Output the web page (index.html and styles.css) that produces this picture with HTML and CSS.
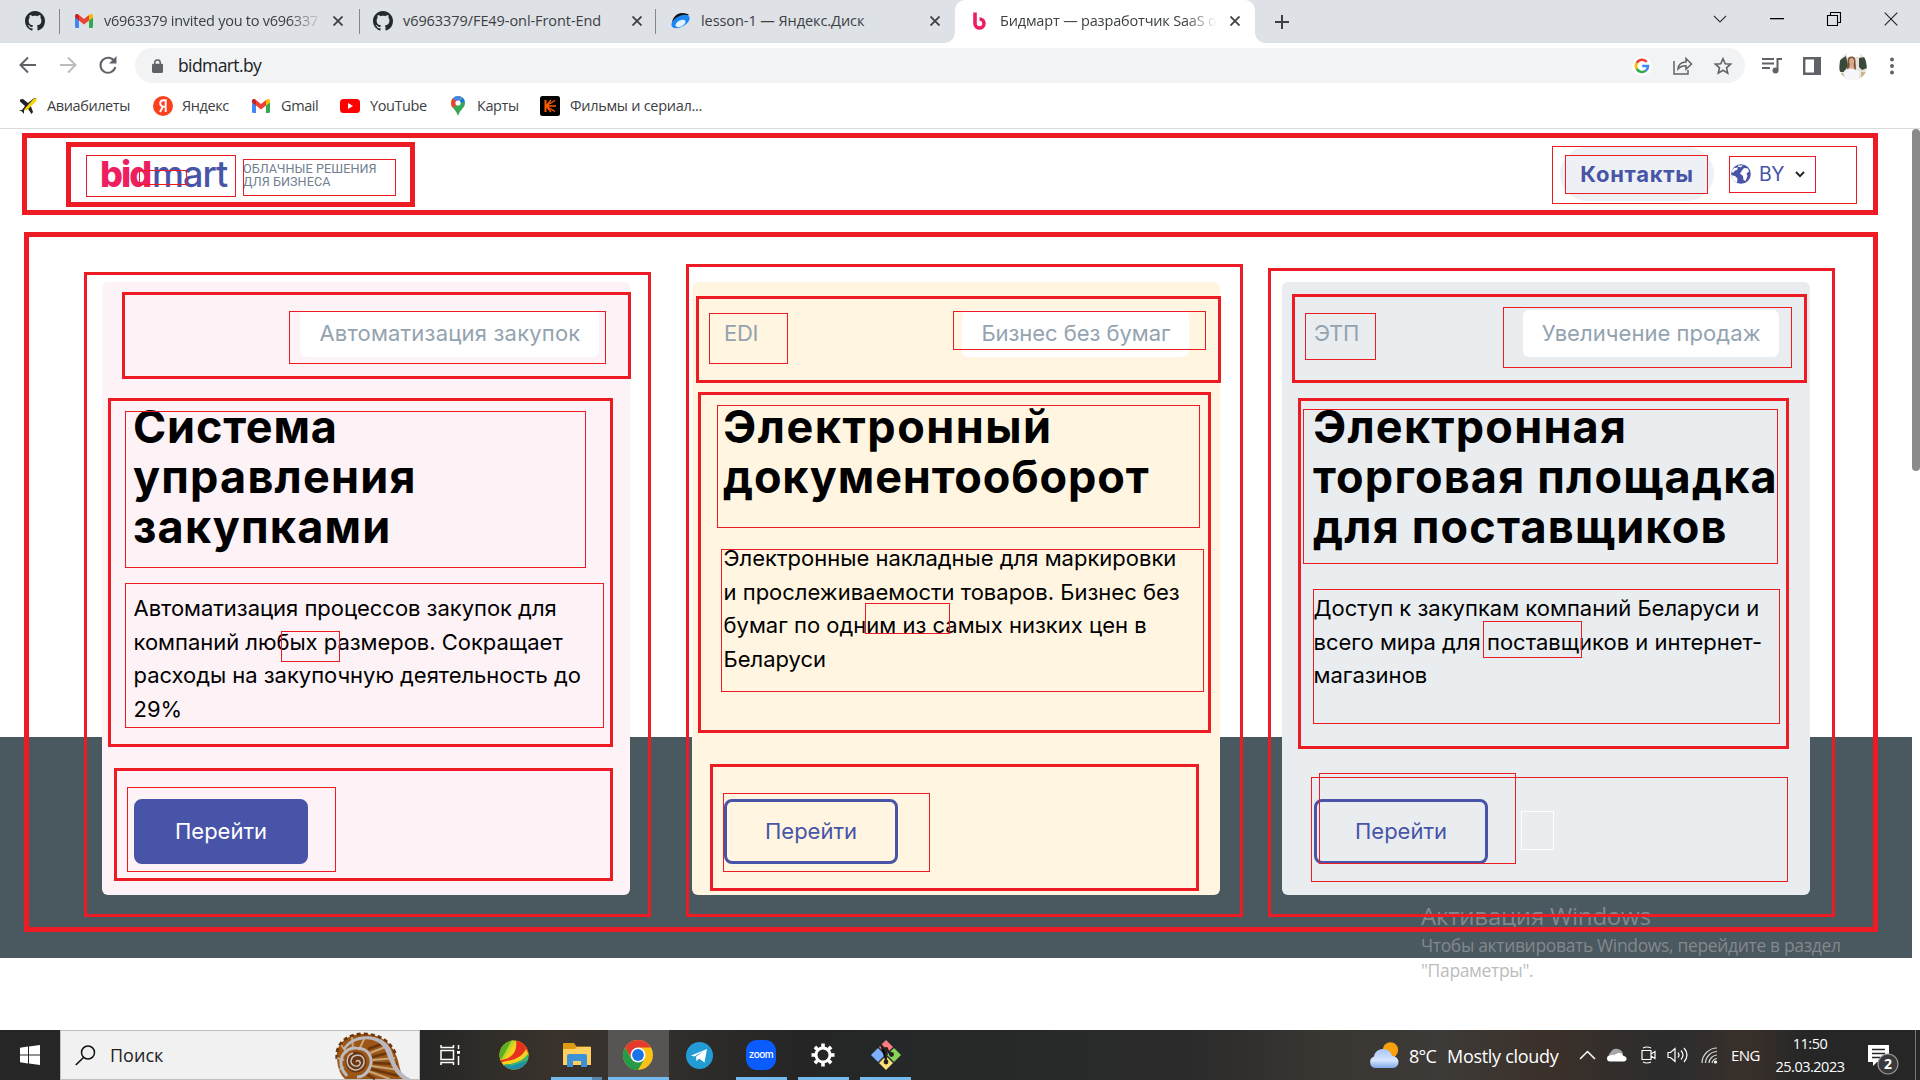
FILE: index.html
```html
<!DOCTYPE html>
<html lang="ru">
<head>
<meta charset="utf-8">
<title>Бидмарт — разработчик SaaS</title>
<link rel="stylesheet" href="styles.css">
</head>
<body>
<svg class="defs" width="0" height="0">
  <symbol id="github" viewBox="0 0 16 16"><path fill="#24292f" d="M8 0C3.58 0 0 3.58 0 8c0 3.54 2.29 6.53 5.47 7.59.4.07.55-.17.55-.38 0-.19-.01-.82-.01-1.49-2.01.37-2.53-.49-2.69-.94-.09-.23-.48-.94-.82-1.13-.28-.15-.68-.52-.01-.53.63-.01 1.08.58 1.23.82.72 1.21 1.87.87 2.33.66.07-.52.28-.87.51-1.07-1.78-.2-3.64-.89-3.64-3.95 0-.87.31-1.59.82-2.15-.08-.2-.36-1.02.08-2.12 0 0 .67-.21 2.2.82.64-.18 1.32-.27 2-.27s1.36.09 2 .27c1.53-1.04 2.2-.82 2.2-.82.44 1.1.16 1.92.08 2.12.51.56.82 1.27.82 2.15 0 3.07-1.87 3.75-3.65 3.95.29.25.54.73.54 1.48 0 1.07-.01 1.93-.01 2.2 0 .21.15.46.55.38A8.01 8.01 0 0 0 16 8c0-4.42-3.58-8-8-8z"/></symbol>
  <symbol id="gmail" viewBox="0 0 18 14"><path fill="#4285f4" d="M0 3v9.500Q0 14 1.500 14H4V6z"/><path fill="#34a853" d="M18 3v9.500Q18 14 16.500 14H14V6z"/><path fill="#fbbc04" d="M14 1.500V6.600L18 3.500V2C18 0 16-.7 14.500.5z"/><path fill="#c5221f" d="M4 1.500V6.600L0 3.500V2C0 0 2-.7 3.500.5z"/><path fill="#ea4335" d="M4 1v5.600l5 3.800 5-3.800V1L9 4.900z"/></symbol>
  <symbol id="close" viewBox="0 0 10 10"><path d="M.5.500l9 9M9.500.5L.5 9.500" stroke="#3c4043" stroke-width="1.800"/></symbol>
</svg>

<div class="tabs">
  <div class="tab pinned"><svg width="20" height="20"><use href="#github"/></svg></div>
  <div class="tab mail"><svg width="18" height="14"><use href="#gmail"/></svg><span class="name fade">v6963379 invited you to v696337</span><svg width="10" height="10"><use href="#close"/></svg></div>
  <div class="tab repo"><svg width="20" height="20"><use href="#github"/></svg><span class="name">v6963379/FE49-onl-Front-End</span><svg width="10" height="10"><use href="#close"/></svg></div>
  <div class="tab disk"><svg width="20" height="16" viewBox="0 0 20 16"><path fill="#111" d="M2 9C3 4 7 0 12 0c4 0 6 1 7 2z"/><ellipse cx="10.500" cy="8.500" rx="10" ry="5.500" transform="rotate(-28 10.500 8.500)" fill="#1c86f5"/><ellipse cx="10.500" cy="10.500" rx="5.500" ry="3" transform="rotate(-28 10.500 10.500)" fill="#e4f1ff"/></svg><span class="name">lesson-1 — Яндекс.Диск</span><svg width="10" height="10"><use href="#close"/></svg></div>
  <div class="tab active"><svg width="13" height="18" viewBox="0 0 13 18"><path d="M2 .5V11.500a4.500 4.500 0 1 0 4.500-4.500" fill="none" stroke="#ed1f60" stroke-width="3.600"/></svg><span class="name fade">Бидмарт — разработчик SaaS о</span><svg width="10" height="10"><use href="#close"/></svg></div>
  <svg class="plus" width="14" height="14" viewBox="0 0 14 14"><path d="M7 0v14M0 7h14" stroke="#3c4043" stroke-width="2"/></svg>
  <div class="window-buttons">
    <svg width="14" height="10" viewBox="0 0 14 10"><path d="M1 2l6 6 6-6" fill="none" stroke="#333" stroke-width="1.100"/></svg>
    <svg width="14" height="2"><rect width="14" height="1.300" fill="#000"/></svg>
    <svg width="14" height="14" viewBox="0 0 14 14"><path d="M.5 3.500h10v10H.5zM3.500 3V.5h10v10H11" fill="none" stroke="#000" stroke-width="1.100"/></svg>
    <svg width="14" height="14" viewBox="0 0 14 14"><path d="M.7.700l12.600 12.600M13.300.7L.7 13.300" stroke="#222" stroke-width="1.100"/></svg>
  </div>
</div>

<div class="toolbar">
  <svg width="18" height="18" viewBox="0 0 18 18"><path d="M17 9H2M9 1.500L1.500 9 9 16.500" fill="none" stroke="#5f6368" stroke-width="2"/></svg>
  <svg width="18" height="18" viewBox="0 0 18 18"><path d="M1 9h15M9 1.500L16.500 9 9 16.500" fill="none" stroke="#babcbe" stroke-width="2"/></svg>
  <svg width="18" height="18" viewBox="0 0 18 18"><path d="M15.500 5.500A7.500 7.500 0 1 0 16.300 11" fill="none" stroke="#5f6368" stroke-width="2"/><path d="M17.500 0v7.500H10z" fill="#5f6368"/></svg>
  <div class="omnibox">
    <svg width="11" height="14" viewBox="0 0 12 15"><rect y="5" width="12" height="10" rx="1.500" fill="#5f6368"/><path d="M3 6V4a3 3 0 0 1 6 0v2" fill="none" stroke="#5f6368" stroke-width="1.600"/></svg>
    <span class="url">bidmart.by</span>
    <svg width="20" height="20" viewBox="0 0 20 20"><circle cx="10" cy="10" r="10" fill="#fff"/><g fill="none" stroke-width="2.600"><path d="M14.700 5.900A6 6 0 0 0 4.800 7" stroke="#ea4335"/><path d="M4.800 7a6 6 0 0 0 0 6" stroke="#fbbc04"/><path d="M4.800 13a6 6 0 0 0 9.300 1.400" stroke="#34a853"/><path d="M14.100 14.400A6 6 0 0 0 16 10h-5.800" stroke="#4285f4"/></g></svg>
    <svg width="20" height="18" viewBox="0 0 20 18"><path d="M1 4v13h14v-4M5 12c.5-4.500 3.500-7 8-7V1.500L18.500 7 13 12.300V8.800c-3.500 0-6 1-8 3.200z" fill="none" stroke="#5f6368" stroke-width="1.500"/></svg>
    <svg width="18" height="18" viewBox="0 0 18 18"><path d="M9 1.700l2.200 5 5.400.5-4.100 3.600 1.200 5.300L9 13.300l-4.700 2.800 1.200-5.300L1.400 7.200l5.400-.5z" fill="none" stroke="#5f6368" stroke-width="1.600"/></svg>
  </div>
  <svg width="20" height="17" viewBox="0 0 20 17"><path d="M0 2h12M0 6.500h12M0 11h8M15.500 13V2H20" fill="none" stroke="#5f6368" stroke-width="2"/><circle cx="13.500" cy="13.500" r="3" fill="#5f6368"/></svg>
  <svg class="panel" width="18" height="18" viewBox="0 0 18 18"><path d="M1.200 1.200h15.600v15.600H1.200z" fill="#fff" stroke="#5f6368" stroke-width="2.400"/><path d="M11 0h7v18h-7z" fill="#5f6368"/></svg>
  <svg class="avatar" width="28" height="28" viewBox="0 0 28 28"><clipPath id="face"><circle cx="14" cy="14" r="14"/></clipPath><g clip-path="url(#face)"><path fill="#e6e4dc" d="M0 0h28v28H0z"/><path fill="#39493a" d="M1 8l6-4 2 10-4 6H0zM20 6l6-1 2 11-5 2-3-3z"/><path fill="#fff" d="M8 0h13v5H8z"/><path fill="#7a5239" d="M8.500 9q0-4.500 4-4.500t4 4.500l.5 9H8z"/><ellipse cx="12.600" cy="9.500" rx="2.500" ry="3.600" fill="#dda98c"/><path fill="#dda98c" d="M11 12h3.500l1 5h-6z"/><path fill="#f6f6fb" d="M4.500 20q3-4 8-3.500t8.500 3.500l-2 8H7z"/><path fill="#c9b48e" d="M0 21h4l2 7H0zM22 20h6v8h-6z"/></g></svg>
  <svg width="4" height="18" viewBox="0 0 4 18" fill="#5f6368"><circle cx="2" cy="2.500" r="2"/><circle cx="2" cy="9" r="2"/><circle cx="2" cy="15.500" r="2"/></svg>
</div>

<div class="bookmarks">
  <span class="bm b1"><svg width="18" height="16" viewBox="0 0 18 16"><path d="M1 1.500l3-.5 5 4L14.500.5 16 0l1 1-5.500 6L14 14l-1.500 2L8.500 10 5 12.500V16l-2-2.500L0 12h3l3-4-5-4.500z" fill="#222"/><path d="M5 11.500L14.500 1 18 0 17 3.500 7.500 12.500z" fill="#f4d60c"/></svg>Авиабилеты</span>
  <span class="bm b2"><svg width="20" height="20" viewBox="0 0 20 20"><circle cx="10" cy="10" r="10" fill="#fc3f1d"/><path d="M12.700 16V4.200h-1.800C8.600 4.200 7.200 5.500 7.200 7.300c0 1.900 1.100 3.200 3.300 3.300h2M10 10.500L7 16" fill="none" stroke="#fff" stroke-width="1.900"/></svg>Яндекс</span>
  <span class="bm b3"><svg width="18" height="14"><use href="#gmail"/></svg>Gmail</span>
  <span class="bm b4"><svg width="20" height="14" viewBox="0 0 20 14"><rect width="20" height="14" rx="3.500" fill="#f00"/><path d="M8 4v6l5-3z" fill="#fff"/></svg>YouTube</span>
  <span class="bm b5"><svg width="14" height="20" viewBox="0 0 14 20"><clipPath id="pin"><path d="M7 0a7 7 0 0 1 7 7c0 5-5 6-7 13C5 13 0 12 0 7a7 7 0 0 1 7-7z"/></clipPath><g clip-path="url(#pin)"><path fill="#34a853" d="M0 0h14v20H0z"/><path fill="#fbbc04" d="M0 14L12 1 6 0 0 6z"/><path fill="#4285f4" d="M2 9L14 0 4-3z"/><path fill="#1a73e8" d="M7 7l7-7v6z"/><path fill="#ea4335" d="M0 0l7 7-5 5-4-4z"/></g><circle cx="7" cy="7" r="2.600" fill="#fff"/></svg>Карты</span>
  <span class="bm b6"><svg width="20" height="20" viewBox="0 0 20 20"><rect width="20" height="20" rx="2.500" fill="#000"/><path d="M5.500 4v12" stroke="#ff5c00" stroke-width="2"/><path d="M6 10L15 4.500M6 10h10M6 10l9 5.500M6 10l5-6M6 10l5 6" stroke="#ff5c00" stroke-width="1.400"/></svg>Фильмы и сериал...</span>
</div>

<main class="page">
  <header class="site-header">
    <div class="logo"><span class="bid">bid</span><span class="mart">mart</span></div>
    <div class="slogan">ОБЛАЧНЫЕ РЕШЕНИЯ<br>ДЛЯ БИЗНЕСА</div>
    <a class="contacts">Контакты</a>
    <div class="lang">
      <svg width="20" height="20" viewBox="0 0 20 20"><circle cx="10" cy="10" r="9.800" fill="#4854a7"/><path fill="#fff" d="M11 6.500l2-2.500 4 .5 1 3-2.500 2 1 2.500-2 5-2-1-.5-4-3-2.500zM.5 7l2.500-3 4-.5L6 6 4 6.500 2 9zM0 11l4 1 2.500 2.500L6 19l-4-3zM7 1.500h5l-2 1.800-3-.5z"/></svg>
      <span>BY</span>
      <svg width="10" height="7" viewBox="0 0 10 7"><path d="M1 1l4 4.200L9 1" fill="none" stroke="#222" stroke-width="1.900"/></svg>
    </div>
  </header>
  <section class="cards">
    <article class="card pink">
      <div class="card-top"><span class="tag"></span><span class="badge auto">Автоматизация закупок</span></div>
      <h2><span class="narrow">Система</span><br>управления<br>закупками</h2>
      <p class="tight-text">Автоматизация процессов закупок для<br>компаний любых размеров. Сокращает<br>расходы на закупочную деятельность до<br>29%</p>
      <a class="go filled">Перейти</a>
    </article>
    <article class="card cream">
      <div class="card-top"><span class="tag">EDI</span><span class="badge paper">Бизнес без бумаг</span></div>
      <h2><span class="wide">Электронный</span><br><span class="tight">документооборот</span></h2>
      <p>Электронные накладные для маркировки<br>и прослеживаемости товаров. Бизнес без<br>бумаг по одним из самых низких цен в<br>Беларуси</p>
      <a class="go">Перейти</a>
    </article>
    <article class="card grey">
      <div class="card-top"><span class="tag">ЭТП</span><span class="badge sales">Увеличение продаж</span></div>
      <h2>Электронная<br>торговая площадка<br>для поставщиков</h2>
      <p>Доступ к закупкам компаний Беларуси и<br>всего мира для поставщиков и интернет-<br>магазинов</p>
      <a class="go">Перейти</a>
    </article>
  </section>
  <div class="scroll-thumb"></div>
</main>

<div class="watermark"><b>Активация Windows</b><span>Чтобы активировать Windows, перейдите в раздел</span><span class="light">"Параметры".</span></div>

<svg class="marks" width="1920" height="1080" fill="none" stroke="#ed1c24" shape-rendering="crispEdges">
  <g stroke-width="5" transform="translate(.5 .5)">
    <path d="M24 135H1875V212H24z"/><path d="M68 144H412V204H68z"/><path d="M26 234H1875V929H26z"/>
  </g>
  <g stroke-width="3" transform="translate(.5 .5)">
    <path d="M85 273H649V915H85z"/><path d="M123 293H629V377H123z"/><path d="M109 399H611V745H109z"/><path d="M115 769H611V879H115z"/>
    <path d="M687 265H1241V915H687z"/><path d="M697 297H1219V381H697z"/><path d="M699 393H1209V731H699z"/><path d="M711 765H1197V889H711z"/>
    <path d="M1269 269H1833V915H1269z"/><path d="M1293 295H1805V381H1293z"/><path d="M1299 399H1787V747H1299z"/>
  </g>
  <g stroke-width="1" transform="translate(.5 .5)">
    <path d="M86 155H235V196H86z"/><path d="M139 170H186V184H139z"/><path d="M243 159H395V195H243z"/>
    <path d="M1552 146H1856V203H1552z"/><path d="M1565 155H1707V193H1565z"/><path d="M1729 156H1815V192H1729z"/>
    <path d="M289 311H605V363H289z"/><path d="M125 411H585V567H125z"/><path d="M125 583H603V727H125z"/><path d="M281 631H339V661H281z"/><path d="M127 787H335V871H127z"/>
    <path d="M709 313H787V363H709z"/><path d="M953 311H1205V349H953z"/><path d="M717 405H1199V527H717z"/><path d="M721 549H1203V691H721z"/><path d="M865 603H949V633H865z"/><path d="M723 793H929V871H723z"/>
    <path d="M1305 313H1375V359H1305z"/><path d="M1503 307H1791V367H1503z"/><path d="M1303 409H1777V563H1303z"/><path d="M1313 589H1779V723H1313z"/><path d="M1483 621H1581V657H1483z"/><path d="M1311 777H1787V881H1311z"/><path d="M1319 773H1515V863H1319z"/>
    <path d="M1521 811H1553V849H1521z" stroke="#fff"/>
  </g>
</svg>

<footer class="taskbar">
  <div class="start"><svg width="20" height="20" viewBox="0 0 20 20" fill="#fff"><path d="M0 2.800l8-1.200v7.900H0zM9 1.400L20 0v9.500H9zM0 10.500h8v7.900l-8-1.200zM9 10.500h11V20L9 18.600z"/></svg></div>
  <div class="search">
    <svg width="21" height="21" viewBox="0 0 21 21"><circle cx="13" cy="7.500" r="6.500" fill="none" stroke="#111" stroke-width="1.500"/><path d="M8.500 12.500L.8 20" stroke="#111" stroke-width="1.600"/></svg>
    <span>Поиск</span>
    <svg class="shell" width="77" height="47" viewBox="0 0 77 47"><path d="M2 27C0 12 12 2 28 2c18 0 28 9 33 21 4 9 3 17 9 24H10Q3 41 2 27z" fill="#9c5717"/><path d="M2 27C0 12 12 2 28 2c18 0 28 9 33 21" fill="none" stroke="#71370c" stroke-width="3" stroke-dasharray="4 3"/><path d="M33 17L50 11M37 25l20-5M38 31l24 1M36 37l28 7M31 42l9 5" stroke="#6b360d" stroke-width="2.500"/><path d="M35 21L53 14M38 28l22-2M37 34l27 4M33 39l22 8M24 18L30 5M18 17L17 5M12 21L6 13M9 28L2 26M9 35l-5 3" stroke="#c9a57c" stroke-width="2"/><path d="M12 44C-1 30 9 15 21 16c14 0 18 12 13 21-3 6-8 8-12 8" fill="none" stroke="#bbbbc0" stroke-width="3"/><path d="M10 18C18 5 44 2 51 20c5 13 9 22 17 27h8C63 41 60 31 57 20 50-1 16 0 8 17z" fill="#b9b9bf"/><circle cx="21" cy="30" r="10.500" fill="#6b3510"/><path d="M21 30c1-3 5-1 4 2-2 4-9 2-9-3 1-7 11-8 13-1 1 7-6 12-12 9-7-4-6-14 1-16" fill="none" stroke="#c9c2bd" stroke-width="1.500"/></svg>
  </div>
  <div class="app w-view"><svg width="21" height="20" viewBox="0 0 21 20" fill="none" stroke="#fff" stroke-width="1.500"><path d="M1 5.500h12.500v9H1zM1 0v2.500h12.500V0M1 20v-2.500h12.500V20M18.500 0v4M18.500 11v9"/><path d="M17 6h3v2.800h-3z" fill="#fff" stroke="none"/></svg></div>
  <div class="app w-ball"><svg width="30" height="30" viewBox="0 0 30 30"><clipPath id="ball"><circle cx="15" cy="15" r="14.500"/></clipPath><g clip-path="url(#ball)"><path fill="#f5d21e" d="M0 0h30v30H0z"/><path fill="#5fae28" d="M0 0h15L4 19H0z"/><path fill="#c5d524" d="M13 0l4 1L6 18l-4 2z"/><path fill="#e8301e" d="M17 0h13v12C24 24 10 22 3 25l-2-5c10-1 18-6 16-20z"/><path fill="#f5d21e" d="M27 9l3 6c-7 8-16 8-26 11l-1-4c10-2 19-3 24-13z"/><path fill="#1d8fa6" d="M30 14v16H8l-5-5c10-1 20-2 27-11z"/><path fill="#40b46c" d="M29 14v6L12 26l-7-1c9-1 18-3 24-11z"/></g></svg></div>
  <div class="app w-files"><svg width="28" height="24" viewBox="0 0 28 24"><path d="M0 1q0-1 1-1h10l2.500 3.500H27q1 0 1 1V8H0z" fill="#dd9b13"/><path d="M0 6h12l2-2h14v18H0z" fill="#ffd05f"/><path d="M4 13q0-2 2-2h16q2 0 2 2v11h-6v-6h-8v6H4z" fill="#3c92d6"/></svg><i class="line split"></i></div>
  <div class="app w-chrome"><svg width="30" height="30" viewBox="0 0 30 30"><circle cx="15" cy="15" r="15" fill="#fbc116"/><path d="M2 7.500a15 15 0 0 1 26 0H15l-6.500 11z" fill="#e33b2e"/><path d="M2 7.500a15 15 0 0 0 13 22.500l6.500-11.200L8.500 18.700z" fill="#279a47"/><circle cx="15" cy="15" r="7.500" fill="#fff"/><circle cx="15" cy="15" r="5.900" fill="#1a73e8"/></svg><i class="line"></i></div>
  <div class="app w-tg"><svg width="27" height="27" viewBox="0 0 27 27"><circle cx="13.500" cy="13.500" r="13.500" fill="#239bd5"/><path d="M5 13.500L21 7l-2.500 13.500-5.500-4-2.500 2.800-.5-4.500 7.500-5.800-9 5.500z" fill="#fff"/></svg></div>
  <div class="app w-zoom"><div class="zoom">zoom</div><i class="line"></i></div>
  <div class="app w-gear"><svg width="24" height="24" viewBox="-12 -12 24 24"><circle r="7" fill="none" stroke="#fff" stroke-width="3"/><g stroke="#fff" stroke-width="3.600"><path id="tooth" d="M0-7.500V-11.500"/><use href="#tooth" transform="rotate(45)"/><use href="#tooth" transform="rotate(90)"/><use href="#tooth" transform="rotate(135)"/><use href="#tooth" transform="rotate(180)"/><use href="#tooth" transform="rotate(225)"/><use href="#tooth" transform="rotate(270)"/><use href="#tooth" transform="rotate(315)"/></g></svg><i class="line"></i></div>
  <div class="app w-git"><svg width="30" height="30" viewBox="0 0 30 30"><path fill="#ff7d80" d="M15 0l7 7-7 7-7-7z"/><path fill="#8ad35b" d="M23 8l7 7-7 7-7-7z"/><path fill="#ffe179" d="M15 16l7 7-7 7-7-7z"/><path fill="#7fb0ff" d="M7 8l7 7-7 7-7-7z"/><path d="M9 4l6 7v12M15 9l6 6" stroke="#222" stroke-width="2.200"/><circle cx="15" cy="22" r="2.400" fill="#222"/><circle cx="20.500" cy="14.500" r="2.400" fill="#222"/><circle cx="15" cy="9.500" r="2.400" fill="#222"/></svg><i class="line"></i></div>
  <div class="tray">
    <svg width="30" height="26" viewBox="0 0 30 26"><defs><linearGradient id="cl" x2="0" y2="1"><stop stop-color="#a8c5f6"/><stop offset=".6" stop-color="#d5e5ff"/><stop offset="1" stop-color="#7fa6ea"/></linearGradient></defs><circle cx="21.500" cy="8" r="7.700" fill="#f8a10e"/><path d="M6 26a6 6 0 0 1-1-11.500C6 9 10 7 14 7c5 0 8 3 9 7a6 6 0 0 1 1 12z" fill="url(#cl)"/></svg>
    <span class="t deg">8°C</span><span class="t cloudy">Mostly cloudy</span>
    <svg class="up" width="17" height="10" viewBox="0 0 17 10"><path d="M1 9l7.500-7.500L16 9" fill="none" stroke="#fff" stroke-width="1.500"/></svg>
    <svg class="onedrive" width="20" height="14" viewBox="0 0 20 14"><path d="M3 12a5 5 0 0 1 0-7C5 1 8 0 11 1c4 1 5 4 5 5l-8 7z" fill="#a6a6a6"/><path d="M3 13.500a3 3 0 0 1 0-6q2-1 4-.5l4-2q4-.5 5.500 3c4 .5 4 5 .5 5.500z" fill="#fff"/></svg>
    <svg class="cam" width="15" height="18" viewBox="0 0 15 18" fill="none" stroke="#fff" stroke-width="1.200"><path d="M1 4.500h9v9H1zM10 8l4-2.500v7L10 10M2 2q4-2 8 0M2 16q4 2 8 0"/></svg>
    <svg class="vol" width="21" height="16" viewBox="0 0 21 16" fill="none" stroke="#fff" stroke-width="1.200"><path d="M1 5.500h2.500L8 1.500v13l-4.500-4H1zM11 5.500q2 2.500 0 5M14 3.500q4 4.500 0 9M17 1q6 7 0 14"/></svg>
    <svg class="wifi" width="17" height="17" viewBox="0 0 17 17" fill="none" stroke="#fff" stroke-width="1.200"><path d="M1 16C1 8 8 1 16 1M4.500 16C4.500 10 10 4.500 16 4.500M8 16c0-4 4-8 8-8M11 16q1-4 5-4.500" opacity=".8"/><circle cx="14.500" cy="15" r="1.600" fill="#fff" stroke="none"/></svg>
    <span class="eng">ENG</span>
    <div class="clock"><span>11:50</span><span>25.03.2023</span></div>
    <svg class="note" width="31" height="31" viewBox="0 0 31 31"><path d="M0 1h21v17H9l-4 4v-4H0z" fill="#fff"/><path d="M4 5.500h13M4 9.500h13M4 13.500h8" stroke="#262626" stroke-width="1.400"/><circle cx="20" cy="20" r="10" fill="#3a3a3a" stroke="#999" stroke-width="1.200"/><text x="20" y="25.200" text-anchor="middle">2</text></svg>
    <i class="edge"></i>
  </div>
</footer>
</body>
</html>
```
FILE: styles.css
```css
* { box-sizing: border-box; }
body { margin: 0; width: 1920px; height: 1080px; overflow: hidden; position: relative; display: flex; flex-direction: column; background: #fff; font-family: "Open Sans", "Noto Sans", sans-serif; color: #3c4043; }
svg { display: block; flex: none; overflow: visible; }
.defs { position: absolute; }

/* browser tabs */
.tabs { height: 43px; display: flex; align-items: stretch; background: #dee1e6; flex: none; }
.tab { display: flex; align-items: center; position: relative; font-size: 14.5px; letter-spacing: -.07px; white-space: nowrap; padding-bottom: 1px !important; }
.tab .name { flex: 1; padding-bottom: 1px; }
.tab + .tab:not(.active)::before { content: ""; width: 1px; height: 25px; background: #85888c; position: absolute; left: 0; top: 9px; }
.fade { -webkit-mask-image: linear-gradient(90deg, #000 85%, transparent); mask-image: linear-gradient(90deg, #000 85%, transparent); }
.pinned { width: 59px; padding-left: 25px; }
.mail { width: 300px; padding: 0 16px; }
.mail .name { margin: 0 11px 0 11px; letter-spacing: -.25px; }
.repo { width: 296px; padding: 0 13px 0 14px; }
.repo .name { margin-left: 10px; }
.disk { width: 300px; padding: 0 15px 0 15px; }
.disk .name { margin-left: 11px; }
.active { width: 300px; padding: 0 15px 0 18px; background: #fff; border-radius: 10px 10px 0 0; }
.active .name { margin: 0 13px 0 14px; letter-spacing: -.18px; }
.active::before, .active::after { content: ""; position: absolute; bottom: 0; width: 10px; height: 10px; }
.active::before { left: -10px; background: radial-gradient(circle at 0 0, #dee1e6 9.5px, #fff 10px); }
.active::after { right: -10px; background: radial-gradient(circle at 100% 0, #dee1e6 9.5px, #fff 10px); }
.plus { align-self: center; margin-left: 20px; }
.window-buttons { margin-left: auto; display: flex; align-items: center; gap: 43px; padding: 0 22px 6px 0; }

/* toolbar */
.toolbar { height: 45px; flex: none; display: flex; align-items: center; padding: 0 26px 0 19px; }
.toolbar > svg:nth-child(2), .toolbar > svg:nth-child(3) { margin-left: 22px; }
.toolbar > svg:nth-child(-n+3) { margin-bottom: 1px; }
.omnibox { width: 1610px; height: 35px; margin: 0 17px 0 18px; border-radius: 18px; background: #f1f3f4; display: flex; align-items: center; padding: 0 13px 0 17px; }
.url { flex: 1; margin-left: 15px; padding-bottom: 1px; font-size: 17.5px; letter-spacing: -.6px; color: #202124; }
.omnibox svg:nth-of-type(3) { margin: 0 21px; }
.panel { margin-left: 21px; }
.avatar { margin: 0 23px 0 18px; }

.bookmarks { height: 41px; flex: none; display: flex; padding: 0 0 5px 19px; border-bottom: 1px solid #dadada; font-size: 14.5px; letter-spacing: -.4px; white-space: nowrap; }
.bm { display: flex; align-items: center; }
.bm svg { margin-right: 9px; }
.b1 { width: 134px; } .b1 svg { margin-right: 10px; }
.b2 { width: 99px; }
.b3 { width: 88px; } .b3 svg { margin-right: 11px; }
.b4 { width: 111px; } .b4 svg { margin-right: 10px; }
.b5 { width: 89px; } .b5 svg { margin-right: 12px; }
.b6 { letter-spacing: -.28px; } .b6 svg { margin-right: 10px; }

/* site */
.page { height: 901px; flex: none; position: relative; padding-right: 8px; font-family: Inter, Roboto, sans-serif; }
.site-header { height: 90px; display: flex; align-items: center; padding: 0 107px 0 100px; }
.logo { width: 143px; font-size: 36px; line-height: 44px; white-space: nowrap; display: flex; }
.bid { color: #ed1f60; font-weight: 800; width: 52px; letter-spacing: -2px; }
.mart { color: #4854a7; font-weight: 500; letter-spacing: -1px; }
.slogan { font: 12.6px/13px Roboto, sans-serif; letter-spacing: .08px; color: #708090; padding-top: 1px; }
.contacts { margin-left: auto; width: 154px; height: 54px; line-height: 54px; border-radius: 27px; background: #edf1f5; color: #4854a7; font-size: 22px; font-weight: 700; letter-spacing: .7px; text-align: center; }
.lang { display: flex; align-items: center; margin-left: 17px; width: 74px; color: #4854a7; font-size: 19.500px; letter-spacing: -.5px; }
.lang span { margin: 0 11px 0 8px; }
.cards { height: 739px; padding: 63px 102px 63px 102px; display: grid; grid-template-columns: repeat(3, 528px); column-gap: 62px; background: linear-gradient(#fff 518px, #4a5860 518px); }
.card { border-radius: 6px; padding: 28px 31px 31px 32px; display: flex; flex-direction: column; height: 613px; white-space: nowrap; }
.pink { background: #fdf2f6; }
.cream { background: #fff5e0; }
.grey { background: #e9edf0; }
.card-top { display: flex; justify-content: space-between; align-items: center; font-size: 22px; color: #94a3b0; }
.tag { letter-spacing: -.3px; padding-bottom: 1px; }
.badge { height: 47px; line-height: 46px; padding: 0 18.500px 0 19px; background: #fff; border-radius: 6px; letter-spacing: .05px; }
.auto { letter-spacing: .2px; }
.paper { letter-spacing: -.05px; }
h2 { margin: 45px 0 40px -1px; font-size: 45px; line-height: 50px; letter-spacing: 1.2px; color: #000; font-weight: 700; }
.tight { letter-spacing: .85px; }
.narrow { letter-spacing: .8px; }
.wide { letter-spacing: 1.500px; }
p { margin: 0 0 0 -.5px; font-size: 22px; line-height: 33.600px; color: #000; letter-spacing: 0; }
.tight-text { letter-spacing: -.03px; }
.go { margin-top: auto; width: 174px; height: 65px; border: 3px solid #4854a7; border-radius: 8px; line-height: 58px; text-align: center; color: #4854a7; font-size: 22px; }
.filled { background: #4854a7; color: #fff; }
.scroll-thumb { position: absolute; right: 0; top: 0; width: 8px; height: 342px; background: #8a8a8a; border-radius: 4px; }

.watermark { position: absolute; left: 1421px; top: 899px; display: flex; flex-direction: column; color: rgba(148, 150, 152, .8); font-size: 17.500px; line-height: 25px; letter-spacing: -.35px; white-space: nowrap; }
.watermark b { font-weight: 400; font-size: 24px; line-height: 33px; padding-bottom: 1px; letter-spacing: -.2px; }
.light { color: #bcbcbc; }
.marks { position: absolute; left: 0; top: 0; }

/* taskbar */
.taskbar { height: 50px; flex: none; display: flex; color: #fff; background: linear-gradient(90deg, #262626 0, #262626 22%, #3a332c 29%, #35312d 32%, #252525 42%, #252828 46%, #2b2b2b 62%, #3a3632 69%, #3d3a37 75%, #3b302a 81%, #2b2c2d 87%, #3a302b 91%, #262626 94%, #262626 100%); }
.start { width: 60px; display: flex; align-items: center; padding-left: 20px; }
.search { width: 360px; background: #f1f1f1; border: 1px solid #c0c0c0; display: flex; align-items: center; padding: 0 7px 0 14px; color: #222; font-size: 18px; }
.search span { flex: 1; margin-left: 14px; }
.app { display: flex; align-items: center; justify-content: center; position: relative; }
.w-view { width: 60px; }
.w-ball { width: 68px; }
.w-files { width: 57px; }
.w-chrome { width: 61px; margin-left: 3px; padding-right: 2px; background: #565554; }
.w-tg { width: 61px; }
.w-zoom { width: 62px; }
.w-gear { width: 62px; }
.w-git { width: 63px; }
.line { position: absolute; bottom: 0; left: 50%; width: 51px; margin-left: -25.500px; height: 3px; background: #76b9ed; }
.w-chrome .line { width: 61px; margin-left: -30.500px; }
.split { background: linear-gradient(90deg, #76b9ed 41px, #5587ae 41px); }
.zoom { width: 30px; height: 30px; border-radius: 11px; background: #0b5cff; font: 500 10px/28px Inter, sans-serif; text-align: center; letter-spacing: -.5px; }
.tray { flex: 1; display: flex; align-items: center; padding-left: 452px; white-space: nowrap; }
.t { font-size: 18px; letter-spacing: -.3px; padding-top: 2px; }
.deg { margin-left: 10px; width: 38px; letter-spacing: -.8px; }
.cloudy { width: 132px; }
.onedrive { margin-left: 11px; }
.cam { margin-left: 14px; }
.vol { margin-left: 11px; }
.wifi { margin-left: 13px; }
.eng { margin-left: 13px; width: 44px; font-size: 15px; letter-spacing: -.6px; }
.clock { width: 70px; display: flex; flex-direction: column; align-items: center; font-size: 14.500px; line-height: 23px; letter-spacing: -.5px; }
.note { margin-left: 23px; margin-top: 8px; }
.note text { font: 700 14px "Open Sans", sans-serif; fill: #fff; }
.edge { margin-left: 16px; width: 1px; height: 50px; background: #777; }
```
